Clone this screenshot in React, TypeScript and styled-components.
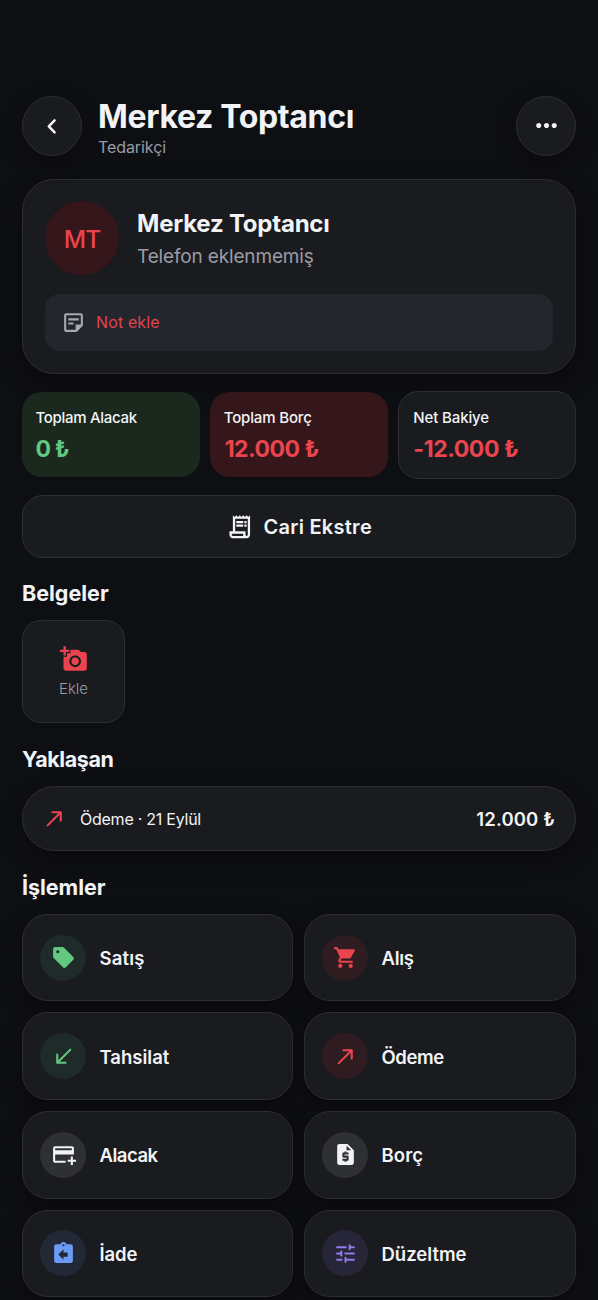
import React from 'react';
import styled, { createGlobalStyle } from 'styled-components';
import {
  MdAddAPhoto,
  MdAddCard,
  MdAssignmentReturn,
  MdMoreHoriz,
  MdOutlineReceiptLong,
  MdOutlineStickyNote2,
  MdRequestQuote,
  MdShoppingCart,
} from 'react-icons/md';

const color = {
  page: '#0e0f13',
  surface: '#1a1b1f',
  raised: '#23262d',
  line: '#2d2e33',
  text: '#f2f3f6',
  muted: '#9a9ba6',
  red: '#ea454e',
  green: '#62c880',
  blue: '#6b9bf7',
  purple: '#8f7cec',
};

const GlobalStyle = createGlobalStyle`
  * { box-sizing: border-box; }
  body {
    margin: 0;
    background: ${color.page};
    color: ${color.text};
    font-family: Inter, "Noto Sans", sans-serif;
  }
  h1, h2, p { margin: 0; }
  button { font: inherit; color: inherit; padding: 0; }
  svg { display: block; flex: none; }
`;

const Screen = styled.main`
  height: 1300px;
  overflow: hidden;
  padding: 96px 22px 0;
  background: ${color.page};
`;

const Header = styled.header`
  display: flex;
  align-items: center;
  height: 60px;
`;

const RoundButton = styled.button`
  display: flex;
  align-items: center;
  justify-content: center;
  flex: none;
  width: 60px;
  height: 60px;
  padding-bottom: 1px;
  border: 1px solid ${color.line};
  border-radius: 50%;
  background: ${color.surface};
  box-shadow: 0 8px 22px rgba(0, 0, 0, 0.3);
`;

const Heading = styled.div`
  flex: 1;
  padding-left: 16px;
  white-space: nowrap;
`;

const Title = styled.h1`
  padding-top: 2px;
  font-size: 32px;
  font-weight: 700;
  line-height: 40px;
  letter-spacing: -0.34px;
`;

const Role = styled.p`
  color: ${color.muted};
  font-size: 16px;
  line-height: 20px;
  letter-spacing: -0.08px;
`;

const Profile = styled.section`
  margin-top: 23px;
  height: 195px;
  padding: 21px 22px;
  border: 1px solid ${color.line};
  border-radius: 32px;
  background: ${color.surface};
  box-shadow: 0 10px 26px rgba(0, 0, 0, 0.38);
`;

const Person = styled.div`
  display: flex;
  align-items: center;
  gap: 18px;
  height: 74px;
`;

const PersonText = styled.div`
  padding-top: 2px;
`;

const Avatar = styled.div`
  display: flex;
  align-items: center;
  justify-content: center;
  width: 74px;
  height: 74px;
  padding-top: 1px;
  border-radius: 50%;
  background: #35161a;
  color: ${color.red};
  font-size: 24.5px;
  font-weight: 500;
  line-height: 30px;
  letter-spacing: -0.9px;
`;

const PersonName = styled.h2`
  font-size: 24px;
  font-weight: 700;
  line-height: 30px;
  letter-spacing: -0.22px;
`;

const Phone = styled.p`
  margin-top: 5px;
  color: ${color.muted};
  font-size: 19px;
  line-height: 26px;
  letter-spacing: -0.15px;
`;

const Note = styled.button`
  display: flex;
  align-items: center;
  gap: 10px;
  width: 100%;
  height: 57px;
  margin-top: 19px;
  padding: 0 0 1px 16px;
  border: 0;
  border-radius: 15px;
  background: ${color.raised};
  color: #a6a7b2;
`;

const NoteLabel = styled.span`
  color: #e0444f;
  font-size: 16px;
  line-height: 20px;
  letter-spacing: 0.13px;
`;

const Stats = styled.section`
  display: grid;
  grid-template-columns: repeat(3, 1fr);
  align-items: center;
  gap: 10.5px;
  height: 88px;
  margin-top: 16.5px;
`;

const Stat = styled.div<{ $fill: string; $outlined?: boolean }>`
  display: flex;
  flex-direction: column;
  justify-content: center;
  gap: 6px;
  height: ${(p) => (p.$outlined ? 88 : 85.5)}px;
  padding: 3px 0 0 ${(p) => (p.$outlined ? 14 : 13.5)}px;
  border-radius: 20px;
  background: ${(p) => p.$fill};
  ${(p) => p.$outlined && `border: 1px solid ${color.line};`}
`;

const StatLabel = styled.span<{ $track: number }>`
  font-size: 15px;
  font-weight: 450;
  line-height: 20px;
  letter-spacing: ${(p) => p.$track}px;
`;

const StatValue = styled.span<{ $tone: string; $track: number; $shift?: number }>`
  padding-left: ${(p) => p.$shift ?? 0}px;
  color: ${(p) => p.$tone};
  font-size: 23px;
  font-weight: 700;
  line-height: 30px;
  letter-spacing: ${(p) => p.$track}px;
`;

const StatementButton = styled.button`
  display: flex;
  align-items: center;
  justify-content: center;
  gap: 10px;
  width: 100%;
  height: 62.5px;
  margin-top: 16.5px;
  border: 1px solid ${color.line};
  border-radius: 21px;
  background: ${color.surface};
  font-size: 20px;
  font-weight: 600;
  letter-spacing: 0.27px;
`;

const StatementLabel = styled.span`
  padding-top: 2px;
`;

const SectionTitle = styled.h2<{ $track?: number }>`
  margin: 21.6px 0 12.9px;
  font-size: 21.5px;
  font-weight: 700;
  line-height: 28px;
  letter-spacing: ${(p) => p.$track ?? 0}px;
`;

const AddDocument = styled.button`
  display: flex;
  flex-direction: column;
  align-items: center;
  justify-content: center;
  gap: 6px;
  width: 103px;
  height: 103.5px;
  border: 1px solid ${color.line};
  border-radius: 19px;
  background: ${color.surface};
  color: ${color.red};
`;

const AddLabel = styled.span`
  color: ${color.muted};
  font-size: 15px;
  font-weight: 300;
  line-height: 20px;
`;

const Upcoming = styled.div`
  display: flex;
  align-items: center;
  height: 65px;
  padding: 0 20px 0 19px;
  border: 1px solid ${color.line};
  border-radius: 33px;
  background: ${color.surface};
  color: ${color.red};
  box-shadow: 0 8px 22px rgba(0, 0, 0, 0.34);
`;

const UpcomingLabel = styled.span`
  flex: 1;
  padding: 2px 0 0 13px;
  color: ${color.text};
  font-size: 16px;
  letter-spacing: -0.25px;
`;

const UpcomingAmount = styled.span`
  padding-top: 1px;
  color: ${color.text};
  font-size: 18.5px;
  font-weight: 600;
  letter-spacing: 0.14px;
`;

const Actions = styled.section`
  display: grid;
  grid-template-columns: 271px 1fr;
  gap: 11px;
  padding-top: 0.4px;
`;

const Action = styled.button<{ $track: number }>`
  display: flex;
  align-items: center;
  gap: 13.5px;
  height: 87.6px;
  padding-left: 17px;
  border: 1px solid ${color.line};
  border-radius: 26px;
  background: ${color.surface};
  box-shadow: 0 8px 22px rgba(0, 0, 0, 0.34);
  font-size: 18.5px;
  font-weight: 600;
  letter-spacing: ${(p) => p.$track}px;
`;

const ActionLabel = styled.span`
  padding-top: 1px;
`;

const Badge = styled.span<{ $tone: string; $fill: string }>`
  display: flex;
  align-items: center;
  justify-content: center;
  width: 46px;
  height: 46px;
  border-radius: 50%;
  background: ${(p) => p.$fill};
  color: ${(p) => p.$tone};
`;

const ChevronIcon = () => (
  <svg width="58" height="58" viewBox="0 0 58 58" fill="none">
    <path d="M31.6 23.4 25.8 29.4l5.8 6" stroke="currentColor" strokeWidth="2.5" strokeLinecap="round" strokeLinejoin="round" />
  </svg>
);

const ArrowUpIcon = ({ size = 25 }: { size?: number }) => (
  <svg width={size} height={size} viewBox="0 0 24 24" fill="currentColor">
    <path d="M9 6c0 .56.45 1 1 1h5.59L4.7 17.89a.996.996 0 1 0 1.41 1.41L17 8.41V14c0 .55.45 1 1 1s1-.45 1-1V6c0-.55-.45-1-1-1h-8c-.55 0-1 .45-1 1z" />
  </svg>
);

const ArrowDownIcon = ({ size = 25 }: { size?: number }) => (
  <svg width={size} height={size} viewBox="0 0 24 24" fill="currentColor">
    <path d="M15 18c0-.56-.45-1-1-1H8.41L19.3 6.11a.996.996 0 1 0-1.41-1.41L7 15.59V10c0-.55-.45-1-1-1s-1 .45-1 1v8c0 .55.45 1 1 1h8c.55 0 1-.45 1-1z" />
  </svg>
);

const TagIcon = () => (
  <svg width="25" height="25" viewBox="0 0 24 24" fill="currentColor">
    <path d="M21.41 11.41l-8.83-8.83c-.37-.37-.88-.58-1.41-.58H4c-1.1 0-2 .9-2 2v7.17c0 .53.21 1.04.59 1.41l8.83 8.83c.78.78 2.05.78 2.83 0l7.17-7.17c.78-.78.78-2.04-.01-2.83zM6.5 8C5.67 8 5 7.33 5 6.5S5.67 5 6.5 5 8 5.67 8 6.5 7.33 8 6.5 8z" />
  </svg>
);

const TuneIcon = () => (
  <svg width="25" height="25" viewBox="0 0 24 24" fill="currentColor">
    <path d="M3 18c0 .55.45 1 1 1h5v-2H4c-.55 0-1 .45-1 1zM3 6c0 .55.45 1 1 1h9V5H4c-.55 0-1 .45-1 1zm10 14v-1h7c.55 0 1-.45 1-1s-.45-1-1-1h-7v-1c0-.55-.45-1-1-1s-1 .45-1 1v4c0 .55.45 1 1 1s1-.45 1-1zM7 10v1H4c-.55 0-1 .45-1 1s.45 1 1 1h3v1c0 .55.45 1 1 1s1-.45 1-1v-4c0-.55-.45-1-1-1s-1 .45-1 1zm14 2c0-.55-.45-1-1-1h-9v2h9c.55 0 1-.45 1-1zm-5-3c.55 0 1-.45 1-1V7h3c.55 0 1-.45 1-1s-.45-1-1-1h-3V4c0-.55-.45-1-1-1s-1 .45-1 1v4c0 .55.45 1 1 1z" />
  </svg>
);

const actions = [
  { label: 'Satış', icon: <TagIcon />, tone: color.green, fill: '#1f2b28', track: 0.17 },
  { label: 'Alış', icon: <MdShoppingCart size={25} />, tone: color.red, fill: '#2f1c21', track: -0.3 },
  { label: 'Tahsilat', icon: <ArrowDownIcon />, tone: color.green, fill: '#1f2b28', track: 0 },
  { label: 'Ödeme', icon: <ArrowUpIcon />, tone: color.red, fill: '#2f1c21', track: -0.4 },
  { label: 'Alacak', icon: <MdAddCard size={25} />, tone: color.text, fill: '#2f3033', track: -0.5 },
  { label: 'Borç', icon: <MdRequestQuote size={25} />, tone: color.text, fill: '#2f3033', track: 0.1 },
  { label: 'İade', icon: <MdAssignmentReturn size={25} />, tone: color.blue, fill: '#222835', track: -0.1 },
  { label: 'Düzeltme', icon: <TuneIcon />, tone: color.purple, fill: '#272538', track: 0 },
];

export default function App() {
  return (
    <Screen>
      <GlobalStyle />
      <Header>
        <RoundButton aria-label="Geri">
          <ChevronIcon />
        </RoundButton>
        <Heading>
          <Title>Merkez Toptancı</Title>
          <Role>Tedarikçi</Role>
        </Heading>
        <RoundButton aria-label="Diğer">
          <MdMoreHoriz size={31} />
        </RoundButton>
      </Header>

      <Profile>
        <Person>
          <Avatar>MT</Avatar>
          <PersonText>
            <PersonName>Merkez Toptancı</PersonName>
            <Phone>Telefon eklenmemiş</Phone>
          </PersonText>
        </Person>
        <Note>
          <MdOutlineStickyNote2 size={25} />
          <NoteLabel>Not ekle</NoteLabel>
        </Note>
      </Profile>

      <Stats>
        <Stat $fill="#1a281e">
          <StatLabel $track={-0.3}>Toplam Alacak</StatLabel>
          <StatValue $tone={color.green} $track={-0.9}>0 ₺</StatValue>
        </Stat>
        <Stat $fill="#35161a">
          <StatLabel $track={-0.15}>Toplam Borç</StatLabel>
          <StatValue $tone={color.red} $track={-0.5} $shift={1}>12.000 ₺</StatValue>
        </Stat>
        <Stat $fill={color.surface} $outlined>
          <StatLabel $track={-0.13}>Net Bakiye</StatLabel>
          <StatValue $tone={color.red} $track={-0.43}>-12.000 ₺</StatValue>
        </Stat>
      </Stats>

      <StatementButton>
        <MdOutlineReceiptLong size={27.5} />
        <StatementLabel>Cari Ekstre</StatementLabel>
      </StatementButton>

      <SectionTitle>Belgeler</SectionTitle>
      <AddDocument>
        <MdAddAPhoto size={28} />
        <AddLabel>Ekle</AddLabel>
      </AddDocument>

      <SectionTitle $track={-0.4}>Yaklaşan</SectionTitle>
      <Upcoming>
        <ArrowUpIcon />
        <UpcomingLabel>Ödeme · 21 Eylül</UpcomingLabel>
        <UpcomingAmount>12.000 ₺</UpcomingAmount>
      </Upcoming>

      <SectionTitle $track={-0.03}>İşlemler</SectionTitle>
      <Actions>
        {actions.map((a) => (
          <Action key={a.label} $track={a.track}>
            <Badge $tone={a.tone} $fill={a.fill}>
              {a.icon}
            </Badge>
            <ActionLabel>{a.label}</ActionLabel>
          </Action>
        ))}
      </Actions>
    </Screen>
  );
}
